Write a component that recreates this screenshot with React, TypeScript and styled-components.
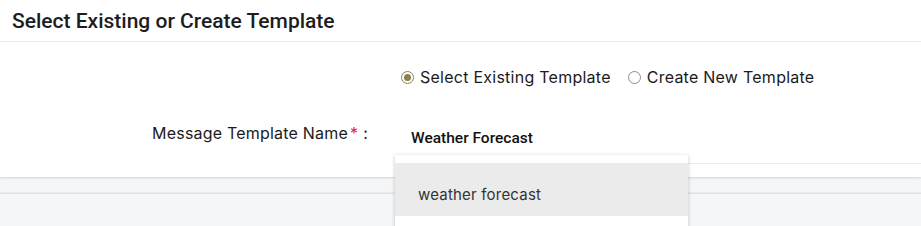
import styled, { createGlobalStyle } from 'styled-components';

const GlobalStyle = createGlobalStyle`
  html, body {
    margin: 0;
    padding: 0;
    background: #f5f6f8;
  }
  * {
    box-sizing: border-box;
  }
`;

const Page = styled.div`
  width: 921px;
  height: 226px;
  overflow: hidden;
  font-family: Inter, 'Noto Sans', sans-serif;
`;

const Card = styled.section`
  background: #fff;
  height: 177px;
  box-shadow: 0 1px 2px rgba(0, 0, 0, 0.14);
  position: relative;
  z-index: 1;
`;

const CardHeader = styled.div`
  height: 42px;
  padding: 0 12px;
  display: flex;
  align-items: center;
  border-bottom: 1px solid #ececec;
`;

const Title = styled.h2`
  margin: 0;
  font-family: Roboto, 'Liberation Sans', sans-serif;
  font-weight: 500;
  font-size: 21px;
  color: #1d1d1f;
`;

const CardBody = styled.div`
  display: grid;
  grid-template-columns: 395px 1fr;
  row-gap: 31px;
  padding-top: 25px;
`;

const RadioRow = styled.div`
  grid-column: 2;
  display: flex;
  align-items: center;
  gap: 17px;
  padding-left: 6px;
  height: 20px;
`;

const RadioOption = styled.label`
  display: flex;
  align-items: center;
  gap: 6px;
  font-size: 16px;
  letter-spacing: 0.25px;
  color: #1b1b1b;
  cursor: pointer;
`;

const RadioMark = styled.span<{ $checked: boolean }>`
  width: 13px;
  height: 13px;
  border-radius: 50%;
  border: 1px solid ${(p) => (p.$checked ? '#8a7f55' : '#8d8d8d')};
  display: flex;
  align-items: center;
  justify-content: center;
  &::after {
    content: '';
    width: 7px;
    height: 7px;
    border-radius: 50%;
    background: ${(p) => (p.$checked ? '#8a7f55' : 'transparent')};
  }
`;

const FieldLabel = styled.div`
  padding: 5px 27px 0 0;
  text-align: right;
  font-size: 16px;
  letter-spacing: 0.2px;
  line-height: 20px;
  color: #1b1b1b;
`;

const Required = styled.span`
  color: #e8231f;
  margin: 0 5px 0 2px;
`;

const InputWrap = styled.div`
  position: relative;
  height: 46px;
  padding: 10px 16px 0;
  border-bottom: 1px solid #ececec;
`;

const InputValue = styled.div`
  font-family: Roboto, 'Liberation Sans', sans-serif;
  font-weight: 500;
  font-size: 15.5px;
  line-height: 20px;
  color: #111;
`;

const Dropdown = styled.ul`
  position: absolute;
  top: 37px;
  left: 0;
  width: 293px;
  margin: 0;
  padding: 8px 0 12px;
  list-style: none;
  background: #fff;
  box-shadow: 0 1px 4px rgba(0, 0, 0, 0.22);
  z-index: 5;
`;

const Option = styled.li<{ $active?: boolean }>`
  height: 53px;
  display: flex;
  align-items: center;
  padding: 9px 0 0 23px;
  font-size: 15px;
  letter-spacing: 0.2px;
  color: #333;
  background: ${(p) => (p.$active ? '#ebebeb' : '#fff')};
`;

const NextPanel = styled.div`
  margin-top: 16px;
  height: 60px;
  border-top: 1px solid #e0e1e3;
  box-shadow: 0 -1px 1px rgba(0, 0, 0, 0.04);
  background: #f5f6f8;
`;

export default function App() {
  return (
    <Page>
      <GlobalStyle />
      <Card>
        <CardHeader>
          <Title>Select Existing or Create Template</Title>
        </CardHeader>
        <CardBody>
          <RadioRow>
            <RadioOption>
              <RadioMark $checked />
              Select Existing Template
            </RadioOption>
            <RadioOption>
              <RadioMark $checked={false} />
              Create New Template
            </RadioOption>
          </RadioRow>
          <FieldLabel>
            Message Template Name<Required>*</Required>:
          </FieldLabel>
          <InputWrap>
            <InputValue>Weather Forecast</InputValue>
            <Dropdown>
              <Option $active>weather forecast</Option>
            </Dropdown>
          </InputWrap>
        </CardBody>
      </Card>
      <NextPanel />
    </Page>
  );
}
